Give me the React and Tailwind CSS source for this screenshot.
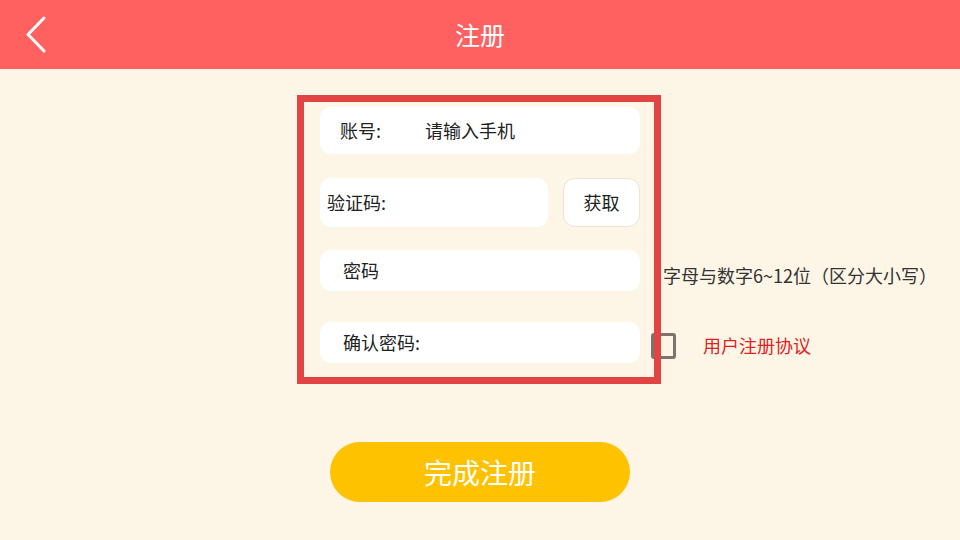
import React from "react";

const font = { fontFamily: '"Noto Sans CJK SC", "Noto Sans", sans-serif' };

function Field({ children, className = "" }) {
  return (
    <div className={`flex items-center bg-white rounded-[11px] ${className}`}>{children}</div>
  );
}

export default function App() {
  return (
    <div className="w-[960px] h-[540px] bg-[#fdf5e6] relative overflow-hidden" style={font}>
      <header className="h-[69px] bg-[#ff6161] flex items-center relative">
        <svg className="absolute left-[24px] top-[15px]" width="24" height="40" viewBox="0 0 24 40">
          <path d="M20 3 L4 19.5 L20 36" fill="none" stroke="white" strokeWidth="3" strokeLinecap="round" strokeLinejoin="round" />
        </svg>
        <div className="flex-1 text-center text-white text-[25px] leading-none">注册</div>
      </header>

      <div className="grid grid-cols-[320px_320px_320px] pt-[38px]">
        <div />
        <div className="flex flex-col">
          <Field className="h-[47px] text-[18px] text-[#222]">
            <span className="ml-[20px] w-[85px]">账号:</span>
            <span>请输入手机</span>
          </Field>
          <div className="flex mt-[24px] gap-[15px]">
            <Field className="h-[49px] w-[228px] text-[18px] text-[#222]">
              <span className="ml-[7px]">验证码:</span>
            </Field>
            <div className="h-[49px] flex-1 bg-white rounded-[12px] border border-[#eee3d3] flex items-center justify-center text-[18px] text-[#222]">
              获取
            </div>
          </div>
          <Field className="h-[41px] mt-[23px] text-[18px] text-[#222]">
            <span className="ml-[23px]">密码</span>
          </Field>
          <Field className="h-[41px] mt-[31px] text-[18px] text-[#222]">
            <span className="ml-[23px]">确认密码:</span>
          </Field>
        </div>
        <div className="flex flex-col">
          <div className="h-[47px]" />
          <div className="h-[49px] mt-[24px]" />
          <div className="h-[41px] mt-[23px] flex items-center pl-[23px] pt-[9px] text-[18px] text-[#333] whitespace-nowrap">
            字母与数字6~12位（区分大小写）
          </div>
          <div className="h-[41px] mt-[31px] flex items-center pl-[11px] pt-[6px]">
            <div className="w-[25px] h-[26px] border-[3px] border-[#7a746c] rounded-[3px]" />
            <span className="ml-[27px] text-[18px] text-[#e02222]">用户注册协议</span>
          </div>
        </div>
      </div>

      <div className="absolute left-[297px] top-[95px] w-[364px] h-[289px] border-[7px] border-[#e24444] pointer-events-none" />

      <div className="flex justify-center mt-[79px]">
        <div className="w-[300px] h-[60px] rounded-full bg-[#ffc200] flex items-center justify-center text-white text-[28px]">
          完成注册
        </div>
      </div>
    </div>
  );
}
